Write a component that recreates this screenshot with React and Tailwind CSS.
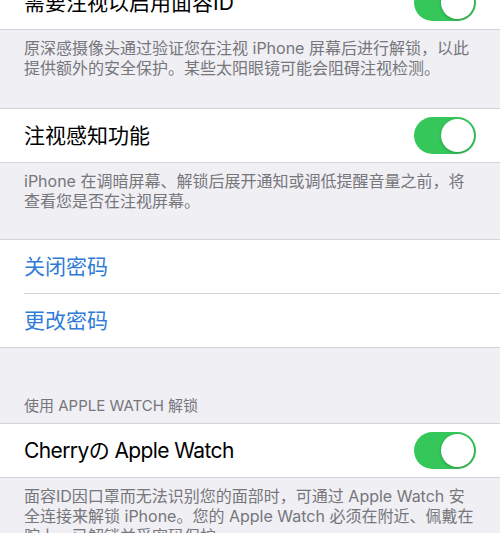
import React from 'react';

const font = { fontFamily: 'Inter, "Noto Sans CJK SC", "Noto Sans", sans-serif' };

const Toggle = () => (
  <div className="w-[62px] h-[37px] rounded-full bg-[#35c759] relative shrink-0">
    <div className="absolute right-[2px] top-[2px] w-[33px] h-[33px] rounded-full bg-white shadow-[0_1px_3px_rgba(0,0,0,0.25)]" />
  </div>
);

const Row = ({ children, toggle, className = '' }) => (
  <div className={`bg-white flex items-center justify-between pl-6 pr-6 ${className}`}>
    {children}
    {toggle && <Toggle />}
  </div>
);

const Footer = ({ children, className = '' }) => (
  <div className={`px-6 pt-2 text-[16px] leading-[20px] text-[#76767b] ${className}`}>{children}</div>
);

export default function App() {
  return (
    <div className="w-[500px] h-[533px] overflow-hidden bg-[#efeff4]" style={font}>
      <Row toggle className="h-[54px] -mt-[24px] border-b border-[#d3d3d8]">
        <span className="text-[21px] text-black">需要注视以启用面容ID</span>
      </Row>
      <Footer className="pb-[30px]">
        原深感摄像头通过验证您在注视 iPhone 屏幕后进行解锁，以此提供额外的安全保护。某些太阳眼镜可能会阻碍注视检测。
      </Footer>

      <Row toggle className="h-[55px] border-y border-[#d3d3d8]">
        <span className="text-[21px] text-black">注视感知功能</span>
      </Row>
      <Footer className="pb-[28px]">
        iPhone 在调暗屏幕、解锁后展开通知或调低提醒音量之前，将查看您是否在注视屏幕。
      </Footer>

      <div className="bg-white border-y border-[#d3d3d8]">
        <div className="h-[53px] flex items-center pl-6 text-[21px] text-[#2f7bd8]">关闭密码</div>
        <div className="ml-6 border-t border-[#d3d3d8]" />
        <div className="h-[53px] flex items-center pl-6 text-[21px] text-[#2f7bd8]">更改密码</div>
      </div>

      <div className="px-6 pt-[48px] pb-[7px] text-[15px] leading-[20px] text-[#76767b]">
        使用 APPLE WATCH 解锁
      </div>

      <Row toggle className="h-[55px] border-y border-[#d3d3d8]">
        <span className="text-[21px] tracking-[-0.6px] text-black">Cherryの Apple Watch</span>
      </Row>
      <Footer>
        面容ID因口罩而无法识别您的面部时，可通过 Apple Watch 安全连接来解锁 iPhone。您的 Apple Watch 必须在附近、佩戴在腕上、已解锁并受密码保护。
      </Footer>
    </div>
  );
}
